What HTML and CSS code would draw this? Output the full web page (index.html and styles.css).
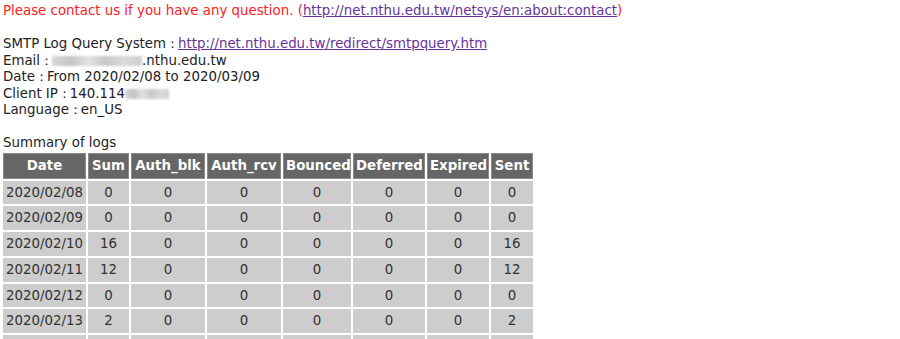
FILE: index.html
```html
<!DOCTYPE html>
<html>
<head>
<meta charset="utf-8">
<link rel="stylesheet" href="styles.css">
</head>
<body>
<div class="notice">Please contact us if you have any question. (<a href="#">http://net.nthu.edu.tw/netsys/en:about:contact</a>)</div>
<br>
<div class="info">
<div>SMTP Log Query System<span class="colon">：</span><a href="#">http://net.nthu.edu.tw/redirect/smtpquery.htm</a></div>
<div>Email<span class="colon">：</span><span class="blur blur-email"></span>.nthu.edu.tw</div>
<div>Date<span class="colon">：</span>From 2020/02/08 to 2020/03/09</div>
<div>Client IP<span class="colon">：</span>140.114<span class="blur blur-ip"></span></div>
<div>Language<span class="colon">：</span>en_US</div>
</div>
<br>
<div class="caption">Summary of logs</div>
<table class="logs">
<thead>
<tr><th class="c-date">Date</th><th class="c-sum">Sum</th><th class="c-blk">Auth_blk</th><th class="c-rcv">Auth_rcv</th><th class="c-bnc">Bounced</th><th class="c-def">Deferred</th><th class="c-exp">Expired</th><th class="c-snt">Sent</th></tr>
</thead>
<tbody>
<tr><td>2020/02/08</td><td>0</td><td>0</td><td>0</td><td>0</td><td>0</td><td>0</td><td>0</td></tr>
<tr><td>2020/02/09</td><td>0</td><td>0</td><td>0</td><td>0</td><td>0</td><td>0</td><td>0</td></tr>
<tr><td>2020/02/10</td><td>16</td><td>0</td><td>0</td><td>0</td><td>0</td><td>0</td><td>16</td></tr>
<tr><td>2020/02/11</td><td>12</td><td>0</td><td>0</td><td>0</td><td>0</td><td>0</td><td>12</td></tr>
<tr><td>2020/02/12</td><td>0</td><td>0</td><td>0</td><td>0</td><td>0</td><td>0</td><td>0</td></tr>
<tr><td>2020/02/13</td><td>2</td><td>0</td><td>0</td><td>0</td><td>0</td><td>0</td><td>2</td></tr>
<tr><td>2020/02/14</td><td>0</td><td>0</td><td>0</td><td>0</td><td>0</td><td>0</td><td>0</td></tr>
</tbody>
</table>
</body>
</html>
```
FILE: styles.css
```css
html, body {
  margin: 0;
  background: #fff;
}
body {
  padding: 3px;
  font-family: "DejaVu Sans", Verdana, sans-serif;
  font-size: 13.35px;
  line-height: 16.5px;
  color: #222;
}
.notice {
  color: #ff2020;
}
a {
  color: #663399;
  text-decoration: underline;
}
.colon {
  display: inline-block;
  width: 12px;
  text-align: center;
}
.blur {
  display: inline-block;
  height: 10px;
  vertical-align: -1px;
  background: linear-gradient(90deg, #d8d8d8, #c4c4c4 20%, #e2e2e2 40%, #c8c8c8 60%, #dadada 80%, #cfcfcf);
  filter: blur(1.2px);
}
.blur-email { width: 90px; }
.blur-ip { width: 44px; }
.logs {
  border-collapse: separate;
  border-spacing: 2px;
  margin: -1px 0 0 -2px;
  table-layout: fixed;
  width: 534px;
  font-size: 13.35px;
}
.logs th, .logs td {
  box-sizing: border-box;
  text-align: center;
  white-space: nowrap;
  line-height: 15.8px;
}
.logs th {
  background: #666;
  color: #fff;
  font-weight: bold;
  border: 1px solid #8a8a8a;
  height: 26px;
  padding: 3px 2px;
}
.logs td {
  background: #cdcdcd;
  color: #333;
  height: 23.8px;
  padding: 4px 3px;
}
.c-date { width: 83px; }
.c-sum { width: 41px; }
.c-blk { width: 74px; }
.c-rcv { width: 74px; }
.c-bnc { width: 68px; }
.c-def { width: 72px; }
.c-exp { width: 62px; }
.c-snt { width: 42px; }
```
